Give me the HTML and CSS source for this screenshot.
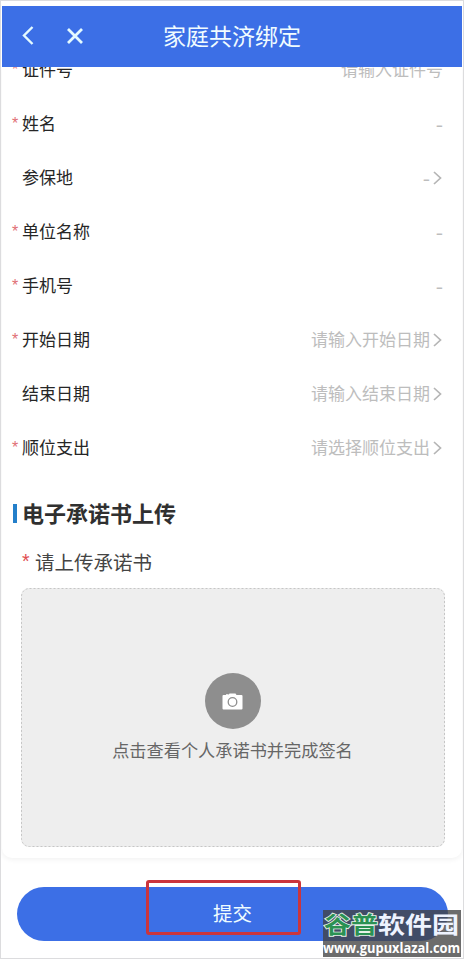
FILE: index.html
```html
<!DOCTYPE html>
<html lang="zh-CN">
<head>
<meta charset="utf-8">
<title>家庭共济绑定</title>
<link rel="stylesheet" href="styles.css">
</head>
<body>
<div class="page">
  <header class="navbar">
    <svg class="back" viewBox="0 0 13 19"><path d="M10.500 1 2 9.500l8.500 8.500"/></svg>
    <svg class="close" viewBox="0 0 16 16"><path d="M1 1l14 14M15 1 1 15"/></svg>
    <h1>家庭共济绑定</h1>
  </header>
  <main class="content">
    <div class="form">
      <div class="row required"><label>证件号</label><span class="value">请输入证件号</span></div>
      <div class="row required"><label>姓名</label><span class="value dash">-</span></div>
      <div class="row"><label>参保地</label><span class="value dash">-</span><svg class="chevron" viewBox="0 0 9 14"><path d="M1 1l6.500 6L1 13"/></svg></div>
      <div class="row required"><label>单位名称</label><span class="value dash">-</span></div>
      <div class="row required"><label>手机号</label><span class="value dash">-</span></div>
      <div class="row required"><label>开始日期</label><span class="value">请输入开始日期</span><svg class="chevron" viewBox="0 0 9 14"><path d="M1 1l6.500 6L1 13"/></svg></div>
      <div class="row"><label>结束日期</label><span class="value">请输入结束日期</span><svg class="chevron" viewBox="0 0 9 14"><path d="M1 1l6.500 6L1 13"/></svg></div>
      <div class="row required"><label>顺位支出</label><span class="value">请选择顺位支出</span><svg class="chevron" viewBox="0 0 9 14"><path d="M1 1l6.500 6L1 13"/></svg></div>
    </div>
    <h2><span>电子承诺书上传</span></h2>
    <p class="upload-label"><span class="star">*</span>请上传承诺书</p>
    <div class="upload">
      <svg class="outline"><rect x="0.5" y="0.5" width="423" height="258" rx="8"/></svg>
      <div class="camera">
        <svg viewBox="0 0 21 17"><path class="body" d="M1.500 2H4V1.200h2.500V2L7.500.5h6L14.500 2h5q1 0 1 1v12.500q0 1-1 1h-18q-1 0-1-1V3q0-1 1-1z"/><circle cx="10.500" cy="9" r="4.300"/></svg>
      </div>
      <span>点击查看个人承诺书并完成签名</span>
    </div>
  </main>
  <footer class="actions">
    <button class="submit">提交</button>
  </footer>
  <div class="highlight"></div>
  <div class="watermark">
    <div class="brand"><span class="green">谷普</span><span>软件园</span></div>
    <div class="site">www.gupuxlazal.com</div>
  </div>
</div>
</body>
</html>
```
FILE: styles.css
```css
* { box-sizing: border-box; }
body {
  margin: 0;
  background: #fff;
  font-family: "Noto Sans CJK SC", sans-serif;
}
.page {
  position: relative;
  display: flex;
  flex-direction: column;
  width: 464px;
  height: 959px;
  padding: 5px 1px 0;
  border: 1px solid #dcdcde;
  overflow: hidden;
}
.navbar {
  position: relative;
  z-index: 1;
  display: flex;
  align-items: center;
  flex: none;
  height: 61px;
  padding: 0 0 2px 20px;
  background: #3c6fe6;
  color: #f0fcff;
}
.navbar svg {
  fill: none;
  stroke: #e4faff;
  stroke-width: 2.4;
}
.back { width: 13px; height: 19px; }
.navbar .close { width: 16px; height: 16px; margin-left: 32px; stroke-width: 2.8; }
.navbar h1 {
  margin: 0 0 0 80px;
  font-size: 23px;
  line-height: 34px;
  font-weight: 400;
  padding-bottom: 1px;
}
.content {
  flex: none;
  height: 791px;
  overflow: hidden;
  border-radius: 0 0 10px 10px;
  box-shadow: 0 2px 5px #f3f3f3;
}
.form { margin-top: -24px; }
.row {
  display: flex;
  align-items: center;
  height: 54px;
  padding: 0 20px 0 10px;
  font-size: 17px;
  line-height: 24px;
  color: #262626;
}
.row label, .value { padding-bottom: 2px; }
.row::before {
  content: "";
  flex: none;
  width: 10px;
  font-family: "Liberation Sans", sans-serif;
  font-size: 16px;
  color: #df6e74;
}
.row.required::before { content: "*"; }
.value {
  margin-left: auto;
  color: #bdbdbd;
}
.value:last-child { margin-right: -1px; }
.dash {
  font-size: 21px;
}
.chevron {
  width: 9px;
  height: 14px;
  margin-left: 3px;
  fill: none;
  stroke: #b5b5b5;
  stroke-width: 1.7;
}
h2 {
  display: flex;
  align-items: center;
  height: 34px;
  margin: 21px 0 0 11px;
  font-size: 22px;
  font-weight: 700;
  color: #303030;
}
h2::before {
  content: "";
  width: 4px;
  height: 19px;
  margin-right: 5px;
  background: #247fca;
}
h2 span { padding-bottom: 3px; }
.upload-label {
  display: flex;
  align-items: center;
  height: 30px;
  margin: 16px 0 12px 20px;
  font-size: 19.5px;
  color: #444;
}
.star {
  width: 13px;
  font-family: "Liberation Sans", sans-serif;
  color: #e04c50;
}
.upload {
  position: relative;
  display: flex;
  flex-direction: column;
  align-items: center;
  width: 424px;
  height: 259px;
  margin-left: 19px;
  padding: 85px 1px 0 0;
  border-radius: 8px;
  background: #eee;
  font-size: 17.2px;
  line-height: 26px;
  color: #666;
}
.outline {
  position: absolute;
  inset: 0;
  width: 424px;
  height: 259px;
  fill: none;
  stroke: #c6c6c6;
  stroke-dasharray: 2 2;
}
.camera {
  display: flex;
  align-items: center;
  justify-content: center;
  width: 56px;
  height: 56px;
  margin-bottom: 8px;
  border-radius: 50%;
  background: #8e8e8e;
}
.camera svg { width: 21px; height: 17px; }
.camera .body { fill: #fff; }
.camera circle { fill: none; stroke: #8e8e8e; stroke-width: 1.3; }
.actions { padding: 29px 13px 0 15px; }
.submit {
  display: block;
  width: 431px;
  height: 54px;
  padding: 0 0 4px;
  border: 0;
  border-radius: 27px;
  background: #3c6fe6;
  font-family: inherit;
  font-size: 19.5px;
  color: #eefcff;
}
.highlight {
  position: absolute;
  left: 145px;
  top: 879px;
  width: 155px;
  height: 55px;
  border: 3px solid #cb353d;
  border-radius: 3px;
}
.watermark {
  position: absolute;
  left: 322px;
  top: 909px;
  width: 138px;
  height: 47px;
  background: rgba(67, 67, 67, .78);
  color: #fff;
  white-space: nowrap;
}
.brand {
  width: 135px;
  height: 28px;
  margin-left: 1px;
  font-size: 27px;
  line-height: 28px;
  font-weight: 700;
  color: #eef3ff;
  transform: scaleY(.86);
}
.green {
  color: #2b9153;
  -webkit-text-stroke: 2px #e6f2e9;
  paint-order: stroke fill;
}
.site {
  width: 144px;
  margin-top: 2px;
  font-family: "Open Sans", sans-serif;
  font-size: 14px;
  line-height: 15px;
  font-weight: 700;
  transform: scaleX(.92);
  transform-origin: 0 0;
}
```
